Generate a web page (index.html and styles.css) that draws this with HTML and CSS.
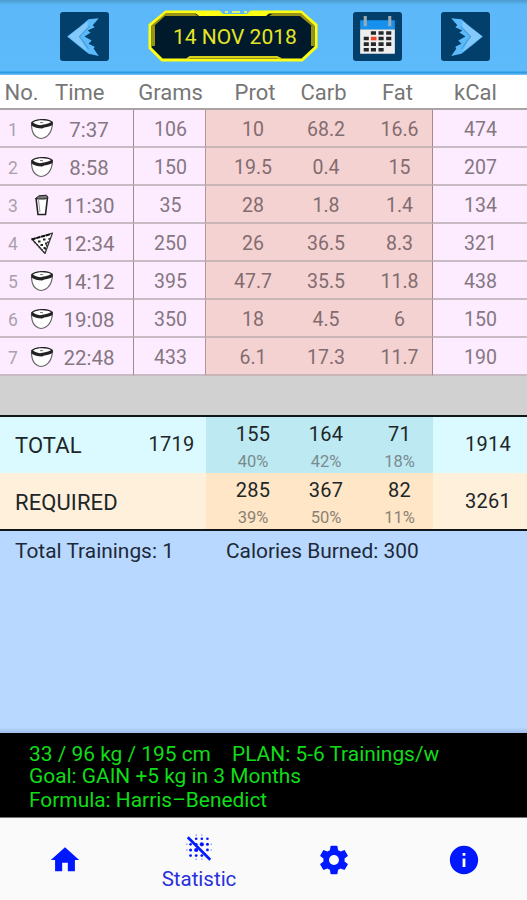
FILE: index.html
```
<!DOCTYPE html>
<html lang="en">
<head>
	<meta charset="utf-8">
	<title>Statistic</title>
	<link rel="stylesheet" href="styles.css">
</head>
<body>
	<!-- shared meal icons -->
	<svg class="defs" width="0" height="0">
		<symbol id="bowl" viewBox="0 0 24 22">
			<path d="M1.500 6C1.500 13 4 19.500 11 20.500C18 19.500 22 14 22.500 5" fill="#fff" stroke="#666" stroke-width="1.200"/>
			<path d="M1 4.500C4 1.500 9 1 12 1C16 1 20 1.500 23 4L22.500 7C19 9 15 9 12 10.500C8 10.500 4 9.500 1.500 7.500Z" fill="#222"/>
			<path d="M3 4.500C6 2.700 9 2.300 12 2.300C16 2.300 19 3 21 4.200C17 6 13 6.500 10 7.200C7 6.700 5 6 3 4.500Z" fill="#fff"/>
			<path d="M10 4.600H13" stroke="#777"/>
		</symbol>
		<symbol id="cup" viewBox="0 0 24 22">
			<path d="M6 4L8 20.500H15.500L17.500 3.500" fill="#fff" stroke="#222" stroke-width="1.600"/>
			<path d="M5.500 4.500L9 1.800L16.500 1.200L18 3.500L15 5H8Z" fill="#777" stroke="#222"/>
			<path d="M8.500 6L10 18" stroke="#999"/>
		</symbol>
		<symbol id="pizza" viewBox="0 0 24 22">
			<path d="M2 7C8 5.500 15 4 22.500 1L15 21.500Z" fill="#fff" stroke="#333" stroke-width="1.200" stroke-linejoin="round"/>
			<path d="M1.500 7.500L21 2" stroke="#111" stroke-width="2" stroke-dasharray="4 1"/>
			<path d="M4 9.500L14 20M19.500 6L15 18" stroke="#333" stroke-width="1.500" stroke-dasharray="2 1.500"/>
			<path d="M8 9.500h2.500M13 7.500h2.500M10.500 13h2.500M15 11.500h2M13.500 16h2" stroke="#222" stroke-width="1.800"/>
		</symbol>
	</svg>

	<header class="topbar">
		<svg class="btn prev" viewBox="0 0 48 48">
			<rect width="48" height="48" rx="3" fill="#023f6b"/>
			<path d="M38 6L28 7L20 14L7 24L18 33L28 41L38 43L33 36L34 34L28 31L31 28L24 24L30 20L27 18L34 15L32 13Z" fill="#5cbafa"/>
			<path d="M27 9L8 24L27 39L19 24L27 15Z" fill="#84c9fa"/>
			<path d="M29 14L19 24L28 36" fill="none" stroke="#3d9cdd" stroke-width="1"/>
		</svg>
		<div class="date">
			<svg viewBox="0 0 170 52">
				<path d="M18 2H153L168 15V37L154 50H14L2 38V15Z" fill="#001a2c" stroke="#ffff13" stroke-width="3"/>
				<path d="M18 3H46L50 6H17L6 16V36H4V15Z" fill="#999318"/>
				<path d="M126 3H153L166 15V36H165V17L152 6H121Z" fill="#999318"/>
				<path d="M5.500 16V36M164.500 16V36" stroke="#999318" stroke-width="3"/>
				<path d="M45 1H124L118 6H51Z" fill="#ffff13"/>
				<path d="M71 0H103L99 4H75Z" fill="#5cbafa"/>
				<path d="M77 2h3M84 2h8M96 2h3" stroke="#dff56a" stroke-width="2"/>
				<path d="M39 49L42 47H129L133 49" fill="#999318" stroke="#d8d31a" stroke-width="2"/>
			</svg>
			<span>14 NOV 2018</span>
		</div>
		<svg class="btn calendar" viewBox="0 0 48 48">
			<rect width="48" height="48" rx="3" fill="#023f6b"/>
			<path d="M7 17H41V41H7Z" fill="#eee"/>
			<path d="M7 8H41V17H7Z" fill="#1692ee"/>
			<path d="M12 4V14M36 4V14" stroke="#9dacb4" stroke-width="3"/>
			<path d="M17.500 20.500h5m2.500 0h5m2.500 0h5M10.500 26h5m9.500 0h5m2.500 0h5M10.500 31.500h5m2 0h5m2.500 0h5m2.500 0h5M10.500 37h5m2 0h5m2.500 0h5" stroke="#25272a" stroke-width="3.500"/>
			<path d="M17.500 26h5.500" stroke="#f34326" stroke-width="3.500"/>
		</svg>
		<svg class="btn next" viewBox="0 0 48 48">
			<rect width="48" height="48" rx="3" fill="#023f6b"/>
			<g transform="matrix(-1 0 0 1 48 0)">
				<path d="M38 6L28 7L20 14L7 24L18 33L28 41L38 43L33 36L34 34L28 31L31 28L24 24L30 20L27 18L34 15L32 13Z" fill="#5cbafa"/>
				<path d="M27 9L8 24L27 39L19 24L27 15Z" fill="#84c9fa"/>
				<path d="M29 14L19 24L28 36" fill="none" stroke="#3d9cdd" stroke-width="1"/>
			</g>
		</svg>
	</header>

	<div class="head">
		<div class="no">No.</div><div class="time">Time</div><div class="grams">Grams</div>
		<div class="prot">Prot</div><div class="carb">Carb</div><div class="fat">Fat</div><div class="kcal">kCal</div>
	</div>

	<div class="meals">
		<div class="row">
			<div class="meal"><i>1</i><svg><use href="#bowl"/></svg><b>7:37</b></div>
			<div class="grams">106</div><div class="prot">10</div><div class="carb">68.2</div><div class="fat">16.6</div><div class="kcal">474</div>
		</div>
		<div class="row">
			<div class="meal"><i>2</i><svg><use href="#bowl"/></svg><b>8:58</b></div>
			<div class="grams">150</div><div class="prot">19.5</div><div class="carb">0.4</div><div class="fat">15</div><div class="kcal">207</div>
		</div>
		<div class="row">
			<div class="meal"><i>3</i><svg><use href="#cup"/></svg><b>11:30</b></div>
			<div class="grams">35</div><div class="prot">28</div><div class="carb">1.8</div><div class="fat">1.4</div><div class="kcal">134</div>
		</div>
		<div class="row">
			<div class="meal"><i>4</i><svg><use href="#pizza"/></svg><b>12:34</b></div>
			<div class="grams">250</div><div class="prot">26</div><div class="carb">36.5</div><div class="fat">8.3</div><div class="kcal">321</div>
		</div>
		<div class="row">
			<div class="meal"><i>5</i><svg><use href="#bowl"/></svg><b>14:12</b></div>
			<div class="grams">395</div><div class="prot">47.7</div><div class="carb">35.5</div><div class="fat">11.8</div><div class="kcal">438</div>
		</div>
		<div class="row">
			<div class="meal"><i>6</i><svg><use href="#bowl"/></svg><b>19:08</b></div>
			<div class="grams">350</div><div class="prot">18</div><div class="carb">4.5</div><div class="fat">6</div><div class="kcal">150</div>
		</div>
		<div class="row">
			<div class="meal"><i>7</i><svg><use href="#bowl"/></svg><b>22:48</b></div>
			<div class="grams">433</div><div class="prot">6.1</div><div class="carb">17.3</div><div class="fat">11.7</div><div class="kcal">190</div>
		</div>
	</div>

	<div class="spacer"></div>

	<div class="sums">
		<div class="sum total">
			<div class="name">TOTAL</div><div class="grams">1719</div>
			<div class="macro prot">155<small>40%</small></div>
			<div class="macro carb">164<small>42%</small></div>
			<div class="macro fat">71<small>18%</small></div>
			<div class="kcal">1914</div>
		</div>
		<div class="sum required">
			<div class="name">REQUIRED</div><div class="grams"></div>
			<div class="macro prot">285<small>39%</small></div>
			<div class="macro carb">367<small>50%</small></div>
			<div class="macro fat">82<small>11%</small></div>
			<div class="kcal">3261</div>
		</div>
	</div>

	<div class="training">
		<span class="count">Total Trainings: 1</span>
		<span class="burned">Calories Burned: 300</span>
	</div>

	<div class="profile">
		<p><span class="body">33 / 96 kg / 195 cm</span><span class="plan">PLAN: 5-6 Trainings/w</span></p>
		<p class="goal">Goal: GAIN +5 kg in 3 Months</p>
		<p class="formula">Formula: Harris–Benedict</p>
	</div>

	<nav class="nav">
		<a class="home"><svg viewBox="0 0 24 24"><path d="M10 20v-6h4v6h5v-8h3L12 3 2 12h3v8z"/></svg></a>
		<a class="active">
			<svg viewBox="0 0 32 32">
				<path d="M3 4.500L5 2.500L29 26.500L27 28.500Z"/>
				<circle cx="13" cy="5" r="1.400"/><circle cx="19" cy="5" r="1.400"/><circle cx="25" cy="5" r="1.400"/>
				<circle cx="19" cy="11" r="2.200"/><circle cx="25" cy="11" r="1.600"/><circle cx="13" cy="11" r="1.400"/>
				<circle cx="7" cy="11" r="1.400"/><circle cx="7" cy="17" r="1.600"/><circle cx="13" cy="17" r="2.200"/>
				<circle cx="25" cy="17" r="1.500"/><circle cx="7" cy="23" r="1.500"/><circle cx="13" cy="23" r="1.500"/><circle cx="19" cy="23" r="1.500"/>
				<g opacity=".5"><circle cx="13" cy="1" r=".8"/><circle cx="19" cy="1" r=".8"/><circle cx="29" cy="11" r=".8"/><circle cx="29" cy="17" r=".8"/><circle cx="3" cy="11" r=".8"/><circle cx="3" cy="17" r=".8"/><circle cx="13" cy="27" r=".8"/><circle cx="19" cy="27" r=".8"/></g>
			</svg>
			<span>Statistic</span>
		</a>
		<a class="settings"><svg viewBox="0 0 24 24"><path d="M19.430 12.980c.04-.32.07-.64.07-.98s-.03-.66-.07-.98l2.110-1.650c.19-.15.24-.42.12-.64l-2-3.460c-.12-.22-.39-.3-.61-.22l-2.490 1c-.52-.4-1.080-.73-1.690-.98l-.38-2.650C14.460 2.180 14.250 2 14 2h-4c-.25 0-.46.18-.49.42l-.38 2.650c-.61.25-1.170.59-1.690.98l-2.490-1c-.23-.09-.49 0-.61.22l-2 3.460c-.13.22-.07.49.12.64l2.110 1.650c-.04.32-.07.65-.07.98s.03.66.07.98l-2.110 1.650c-.19.15-.24.42-.12.64l2 3.460c.12.22.39.3.61.22l2.490-1c.52.4 1.080.73 1.690.98l.38 2.650c.03.24.24.42.49.42h4c.25 0 .46-.18.49-.42l.38-2.650c.61-.25 1.170-.59 1.690-.98l2.490 1c.23.09.49 0 .61-.22l2-3.460c.12-.22.07-.49-.12-.64zM12 15.500c-1.930 0-3.500-1.570-3.500-3.500s1.570-3.500 3.500-3.500 3.500 1.570 3.500 3.500-1.570 3.500-3.500 3.500z"/></svg></a>
		<a class="info"><svg viewBox="0 0 24 24"><path d="M12 2C6.480 2 2 6.480 2 12s4.480 10 10 10 10-4.480 10-10S17.520 2 12 2zm1 15h-2v-6h2v6zm0-8h-2V7h2v2z"/></svg></a>
	</nav>
</body>
</html>
```
FILE: styles.css
```
*{
	margin: 0;
	padding: 0;
	box-sizing: border-box;
}
body{
	width: 527px;
	height: 900px;
	overflow: hidden;
	font-family: Roboto, "Liberation Sans", sans-serif;
	background: #fafafa;
	display: flex;
	flex-direction: column;
}
.defs{
	position: absolute;
}

/* top bar */
.topbar{
	height: 75px;
	flex: none;
	padding: 10px 0 0 60px;
	display: flex;
	align-items: flex-start;
	background: linear-gradient(#4c9ace, #5cb8f8 5px, #5dbafb 71px, #2a9ae2 72px, #2a9ae2 73px, #69bcf5 74px);
}
.btn{
	width: 49px;
	height: 49px;
	margin-top: 2px;
}
.date{
	width: 170px;
	height: 52px;
	margin: 0 35px 0 39px;
	position: relative;
}
.date svg{
	width: 170px;
	height: 52px;
	display: block;
}
.date span{
	position: absolute;
	left: 25px;
	top: 13px;
	font-size: 21px;
	line-height: 28px;
	white-space: nowrap;
	color: #e6e526;
}
.next{
	margin-left: 39px;
}

/* table */
.head, .row, .sum{
	display: grid;
	grid-template-columns: 134px 72px 84px 72px 71px 94px;
	text-align: center;
}
.head{
	grid-template-columns: 43px 91px 73px 83px 72px 71px 94px;
	height: 35px;
	flex: none;
	background: #fff;
	border-bottom: 2px solid #aaa3a5;
	font-size: 22px;
	line-height: 36px;
	color: #767676;
}
.head .time{
	text-align: left;
	padding-left: 12px;
}
.head .prot{
	padding-left: 13px;
}
.head .carb{
	padding-right: 5px;
}
.head .kcal{
	padding-right: 9px;
}
.meals{
	flex: none;
}
.row{
	height: 38px;
	grid-template-rows: 38px;
	font-size: 19.500px;
	line-height: 32px;
	color: #857782;
	background: #fdecff;
}
.row > div{
	padding-top: 4px;
	border-bottom: 2px solid #c9bbc6;
}
.row .meal{
	display: flex;
	align-items: center;
	border-right: 1px solid #a08a8e;
}
.row .grams{
	padding-left: 2px;
	border-right: 1px solid #b0959a;
}
.row .prot, .row .carb, .row .fat{
	color: #826c70;
	background: #f4d2d2;
	border-bottom-color: #c9b5b6;
}
.prot{
	padding-left: 10px;
}
.row .fat{
	padding-left: 5px;
	border-right: 1px solid #a9898d;
}
.row .kcal{
	padding-left: 1px;
}
.meal i{
	width: 26px;
	margin-top: -1px;
	font-style: normal;
	font-size: 17.500px;
	color: #aaa0ac;
}
.meal svg{
	width: 24px;
	height: 22px;
	margin: -3px 0 0 4px;
}
.meal b{
	width: 70px;
	font-weight: 400;
	font-size: 20.500px;
}
.spacer{
	height: 39px;
	flex: none;
	background: #d1d1d1;
}

/* totals */
.sums{
	border-top: 2px solid #10171a;
	border-bottom: 2px solid #10171a;
}
.sum{
	height: 56px;
	grid-template-rows: 56px;
	font-size: 20px;
	line-height: 55px;
	letter-spacing: .3px;
	color: #202628;
}
.sum .name{
	padding: 1px 0 0 15px;
	text-align: left;
	font-size: 22px;
	letter-spacing: .1px;
}
.sum .grams{
	padding-left: 3px;
}
.sum .kcal{
	padding-left: 16px;
}
.sum .macro{
	line-height: 34px;
}
.sum .fat{
	padding-left: 4px;
}
.sum small{
	display: block;
	font-size: 16.500px;
	line-height: 21px;
	letter-spacing: 0;
	color: #7a8b8e;
}
.total{
	background: #dafaff;
}
.total .macro{
	background: #bce9f2;
}
.required{
	background: #fff0dc;
}
.required .macro{
	background: #ffe6c6;
}
.required .name{
	padding-top: 2px;
}
.required .kcal{
	padding-top: 1px;
}
.required small{
	color: #8c8175;
}

.training{
	height: 202px;
	flex: none;
	padding: 8px 0 0 15px;
	display: flex;
	font-size: 20.900px;
	line-height: 24px;
	color: #1d2938;
	background: linear-gradient(#b8d8ff 196px, #9fbfe9);
}
.training .count{
	width: 211px;
}

.profile{
	height: 85px;
	flex: none;
	padding: 10px 0 0 29px;
	background: #000;
	border-bottom: 1px solid #777;
	font-size: 20.900px;
	line-height: 22px;
	color: #10dc18;
}
.profile p{
	display: flex;
}
.profile .body{
	width: 203px;
}
.profile .formula{
	margin-top: 2px;
}

/* bottom navigation */
.nav{
	height: 82px;
	display: grid;
	grid-template-columns: 130px 138px 132px 127px;
	color: #2930df;
	font-size: 20.500px;
}
.nav a{
	display: flex;
	flex-direction: column;
	align-items: center;
}
.nav svg{
	width: 34px;
	height: 34px;
	margin-top: 25px;
	fill: #0018ff;
}
.nav .active svg{
	width: 30px;
	height: 30px;
	margin-top: 16px;
}
.nav .active span{
	line-height: 30px;
}
```
